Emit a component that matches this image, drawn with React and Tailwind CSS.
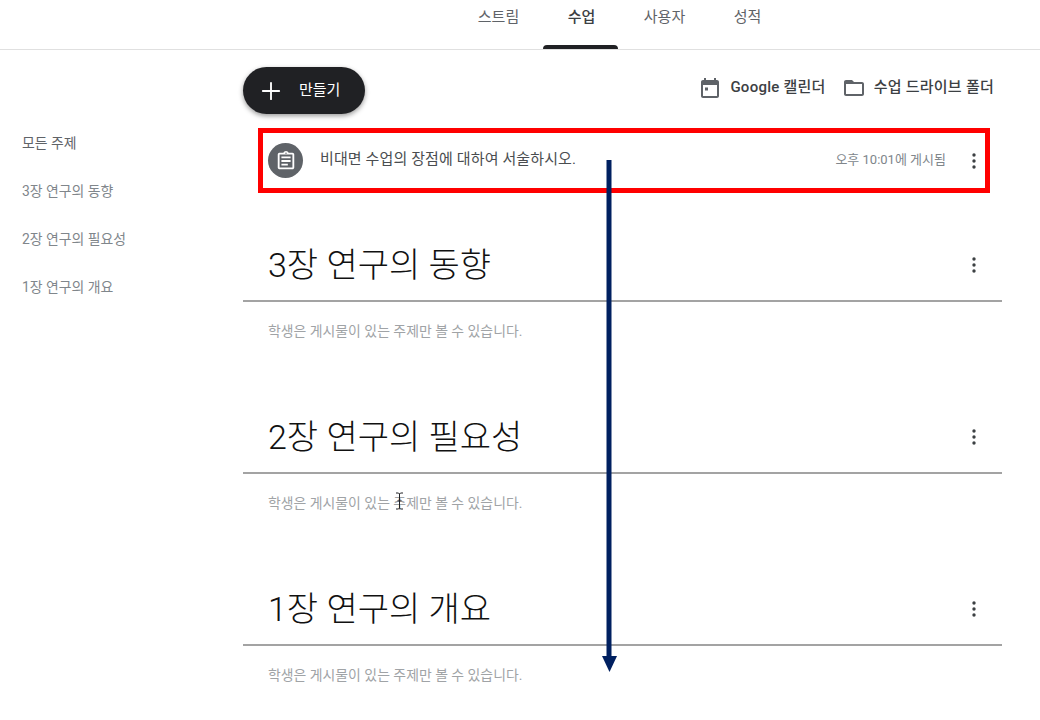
import React from 'react';
import { Plus } from 'lucide-react';

const FONT = 'font-["Roboto","Noto_Sans_CJK_KR",sans-serif]';

const Kebab = () => (
  <svg viewBox="0 0 4 16" className="w-[6px] h-[16px] fill-[#3c4043]">
    <circle cx="2" cy="2" r="1.7" />
    <circle cx="2" cy="8" r="1.7" />
    <circle cx="2" cy="14" r="1.7" />
  </svg>
);

const CalendarIcon = () => (
  <svg viewBox="0 0 24 24" className="w-6 h-6 fill-[#5f6368]">
    <path d="M19 4h-1V2h-2v2H8V2H6v2H5c-1.11 0-1.99.9-1.99 2L3 20c0 1.1.89 2 2 2h14c1.1 0 2-.9 2-2V6c0-1.1-.9-2-2-2zm0 16H5V9h14v11z" />
    <rect x="7" y="11.5" width="3" height="3" />
  </svg>
);

const FolderIcon = () => (
  <svg viewBox="0 0 24 24" className="w-6 h-6 fill-[#5f6368]">
    <path d="M20 6h-8l-2-2H4c-1.1 0-1.99.9-1.99 2L2 18c0 1.1.9 2 2 2h16c1.1 0 2-.9 2-2V8c0-1.1-.9-2-2-2zm0 12H4V8h16v10z" />
  </svg>
);

const AssignmentIcon = () => (
  <svg viewBox="0 0 24 24" className="w-[22px] h-[22px] fill-white">
    <path d="M7 15h7v2H7zm0-4h10v2H7zm0-4h10v2H7zm12-4h-4.18C14.4 1.84 13.3 1 12 1c-1.3 0-2.4.84-2.82 2H5c-.14 0-.27.01-.4.04-.39.08-.74.28-1.01.55-.18.18-.33.4-.43.64-.1.23-.16.49-.16.77v14c0 .27.06.54.16.78s.25.45.43.64c.27.27.62.47 1.01.55.13.02.26.03.4.03h14c1.1 0 2-.9 2-2V5c0-1.1-.9-2-2-2zm-7-.25c.41 0 .75.34.75.75s-.34.75-.75.75-.75-.34-.75-.75.34-.75.75-.75zM19 19H5V5h14v14z" />
  </svg>
);

const Tab = ({ label, active }) => (
  <div className={`relative w-[83px] h-full flex justify-center pt-[6px] text-[15px] leading-[22px] ${active ? 'text-[#3c4043] font-medium' : 'text-[#5f6368]'}`}>
    {label}
    {active && <div className="absolute left-[3px] right-[5px] bottom-0 h-[4px] rounded-t-[4px] bg-[#202124]" />}
  </div>
);

const Topic = ({ title }) => (
  <section className="h-[172px]">
    <div className="h-[73px] flex items-center justify-between pl-[25px] pr-[25px] border-b-2 border-[#a3a3a3]">
      <h2 className="text-[34px] leading-[40px] font-light text-[#111111]">{title}</h2>
      <Kebab />
    </div>
    <p className="pl-[25px] mt-[19px] text-[13.9px] leading-[20px] text-[#a0a3a6]">학생은 게시물이 있는 주제만 볼 수 있습니다.</p>
  </section>
);

export default function App() {
  const topics = ['3장 연구의 동향', '2장 연구의 필요성', '1장 연구의 개요'];

  return (
    <div className={`relative w-[1040px] h-[720px] overflow-hidden bg-white ${FONT}`}>
      <header className="h-[50px] border-b border-[#e0e0e0] flex pl-[457px]">
        <Tab label="스트림" />
        <Tab label="수업" active />
        <Tab label="사용자" />
        <Tab label="성적" />
      </header>

      <div className="flex">
        {/* Sidebar */}
        <aside className="w-[243px] shrink-0 pt-[83px] pl-[22px] flex flex-col gap-[28px] text-[13.9px] leading-[20px] text-[#80868b]">
          <div className="text-[#5f6368]">모든 주제</div>
          {topics.map((t) => (
            <div key={t}>{t}</div>
          ))}
        </aside>

        {/* Main */}
        <main className="w-[759px]">
          <div className="flex items-center justify-between mt-[17px] pr-[8px]">
            <button className="w-[122px] h-[47px] rounded-full bg-[#202124] text-white flex items-center pl-[14px] gap-[14px] shadow-[0_2px_5px_rgba(0,0,0,0.4)]">
              <Plus className="w-[28px] h-[28px]" strokeWidth={1.6} />
              <span className="text-[15px]">만들기</span>
            </button>
            <div className="flex items-center pb-[6px] text-[15px] font-medium tracking-[0.25px] text-[#3c4043]">
              <CalendarIcon />
              <span className="ml-[8px] mr-[16px]">Google 캘린더</span>
              <FolderIcon />
              <span className="ml-[8px]">수업 드라이브 폴더</span>
            </div>
          </div>

          <div className="ml-[15px] mr-[12px] mt-[14px] h-[65px] border-[5px] border-[#ff0000] flex items-center pl-[5px] pr-[8px]">
            <div className="w-[35px] h-[35px] rounded-full bg-[#5f6368] flex items-center justify-center">
              <AssignmentIcon />
            </div>
            <span className="ml-[17px] mb-[2px] text-[15px] tracking-[0.12px] text-[#4a4d50]">비대면 수업의 장점에 대하여 서술하시오.</span>
            <span className="ml-auto mr-[25px] mb-[2px] text-[13px] text-[#80868b]">오후 10:01에 게시됨</span>
            <Kebab />
          </div>

          <div className="mt-[36px]">
            {topics.map((t) => (
              <Topic key={t} title={t} />
            ))}
          </div>
        </main>
      </div>

      {/* annotation arrow */}
      <svg viewBox="0 0 16 512" className="absolute left-[602px] top-[160px] w-[16px] h-[512px] fill-[#002060]">
        <rect x="4.5" y="0" width="5" height="498" />
        <polygon points="0,496 15,496 7.5,512" />
      </svg>

      {/* text cursor */}
      <svg viewBox="0 0 9 18" className="absolute left-[395px] top-[492px] w-[9px] h-[18px] stroke-[#202124] fill-none">
        <path d="M1 1h2.5l1 1 1-1H8M4.5 2v14M1 17h2.5l1-1 1 1H8M2.5 9h4" />
      </svg>
    </div>
  );
}
